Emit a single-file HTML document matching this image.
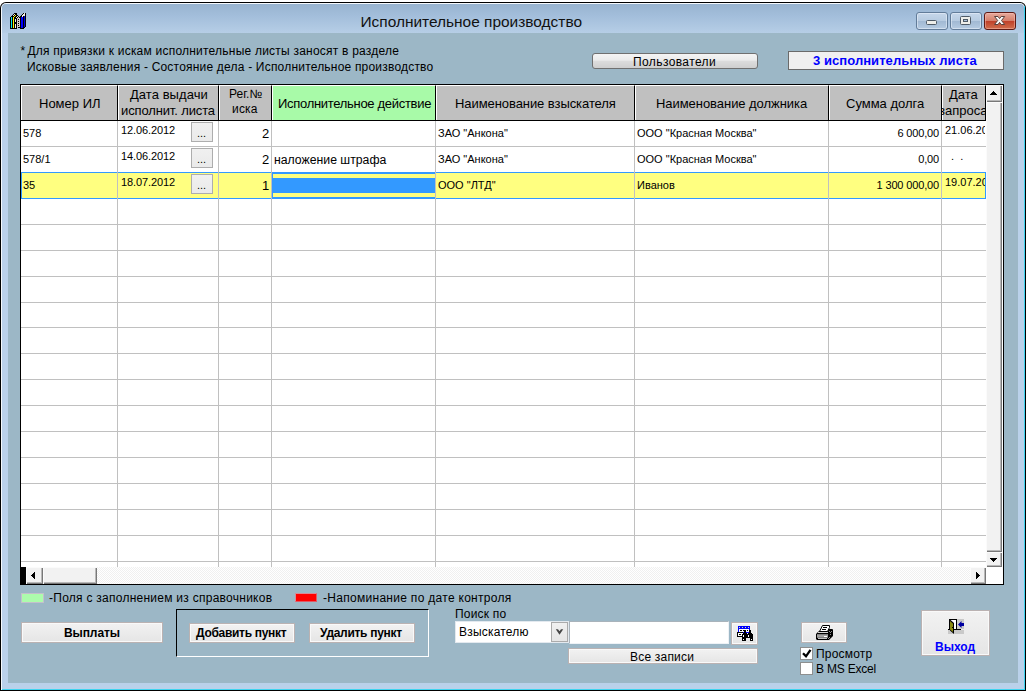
<!DOCTYPE html>
<html lang="ru">
<head>
<meta charset="utf-8">
<title>Исполнительное производство</title>
<style>
html,body{margin:0;padding:0;}
body{width:1026px;height:693px;background:#fff;position:relative;overflow:hidden;
 font-family:"Liberation Sans",sans-serif;font-size:12px;color:#000;}
*{box-sizing:border-box;}
.abs{position:absolute;}
.t{position:absolute;white-space:pre;line-height:1;}
#win{position:absolute;left:0;top:2px;width:1026px;height:689px;background:#000;
 border-radius:6px 6px 0 0;}
#winhl{position:absolute;left:1px;top:1px;width:1024px;height:687px;
 border-radius:5px 5px 0 0;background:#f4f8fc;}
#frame{position:absolute;left:2px;top:2px;width:1022px;height:685px;
 border-radius:4px 4px 0 0;background:#bad1ea;}
#cyanr{position:absolute;left:1024px;top:4px;width:1px;height:684px;background:#3fd4f0;}
#cyanb{position:absolute;left:2px;top:687px;width:1023px;height:1px;background:#3fd4f0;}
#titlebar{position:absolute;left:2px;top:2px;width:1022px;height:29px;
 border-radius:4px 4px 0 0;
 background:linear-gradient(#98b4d0 0px,#a3bedb 12px,#b6cee6 29px);}
#client{position:absolute;left:8px;top:33px;width:1010px;height:650px;background:#9cb7c6;}
.btn{position:absolute;border:1px solid #707070;border-radius:3px;
 background:linear-gradient(#f4f4f4 0,#ebebeb 45%,#dddddd 50%,#cfcfcf 100%);}
.fbtn{position:absolute;border:1px solid #bab2b2;box-shadow:inset 0 0 0 1px #f9f9f9;background:linear-gradient(#f2f2f2,#e5e5e5);}
.sbtn{position:absolute;border:1px solid #adadad;background:linear-gradient(#f0f0f0,#eaeaea);}
.hd{position:absolute;top:85px;height:35px;background:#c0c0c0;border-right:1px solid #000;border-top:1px solid #fff;}
.hd:before{content:"";position:absolute;left:0;top:0;bottom:0;width:1px;background:#fff;}
.vl{position:absolute;top:121px;width:1px;height:446px;background:#c0c0c0;}
.hl{position:absolute;left:21px;width:965px;height:1px;background:#c0c0c0;}
.cb{border:1px solid #627c99;border-radius:3px;background:linear-gradient(#c6d7ea 0,#b7cbe1 48%,#a1b9d3 52%,#b6cbe2 100%);box-shadow:inset 0 0 0 1px rgba(235,243,252,.55);}
.sb3d{background:#f2f2f2;box-shadow:inset 1px 1px 0 #fbfbfb,inset -1px -1px 0 #787878,inset -2px -2px 0 #b8b8b8;}
.c11{font-size:11px;}
.c12{font-size:12px;}
.c13{font-size:13px;}
.ls{letter-spacing:0.2px;}
</style>
</head>
<body>
<div id="win">
 <div id="winhl"></div>
 <div id="frame"></div>
 <div id="titlebar"></div>
 <div id="cyanr"></div>
 <div id="cyanb"></div>
</div>
<div id="client"></div>

<!-- title -->
<div class="t" id="title" style="left:360.5px;top:13.5px;font-size:15.45px;color:#111;">Исполнительное производство</div>

<!-- app icon -->
<svg class="abs" style="left:10px;top:13px" width="16" height="16" viewBox="0 0 16 16" shape-rendering="crispEdges">
 <rect x="4" y="0" width="3" height="1" fill="#000"/><rect x="13" y="0" width="1" height="1" fill="#000"/><rect x="14" y="0" width="1" height="1" fill="#f2eee4"/><rect x="15" y="0" width="1" height="1" fill="#000"/><rect x="3" y="1" width="1" height="1" fill="#000"/><rect x="4" y="1" width="1" height="1" fill="#f2eee4"/><rect x="5" y="1" width="2" height="1" fill="#000"/><rect x="12" y="1" width="1" height="1" fill="#000"/><rect x="13" y="1" width="2" height="1" fill="#f2eee4"/><rect x="15" y="1" width="1" height="1" fill="#000"/><rect x="2" y="2" width="1" height="1" fill="#000"/><rect x="3" y="2" width="1" height="1" fill="#f2eee4"/><rect x="4" y="2" width="1" height="1" fill="#000"/><rect x="5" y="2" width="1" height="1" fill="#ffff00"/><rect x="6" y="2" width="2" height="1" fill="#000"/><rect x="11" y="2" width="1" height="1" fill="#000"/><rect x="12" y="2" width="3" height="1" fill="#f2eee4"/><rect x="15" y="2" width="1" height="1" fill="#000"/><rect x="1" y="3" width="3" height="1" fill="#000"/><rect x="4" y="3" width="1" height="1" fill="#ffff00"/><rect x="5" y="3" width="2" height="1" fill="#000"/><rect x="7" y="3" width="1" height="1" fill="#f2eee4"/><rect x="8" y="3" width="1" height="1" fill="#000"/><rect x="10" y="3" width="2" height="1" fill="#000"/><rect x="12" y="3" width="1" height="1" fill="#f2eee4"/><rect x="13" y="3" width="1" height="1" fill="#000"/><rect x="14" y="3" width="1" height="1" fill="#0000d8"/><rect x="15" y="3" width="1" height="1" fill="#000"/><rect x="0" y="4" width="1" height="1" fill="#000"/><rect x="1" y="4" width="1" height="1" fill="#00e8e8"/><rect x="2" y="4" width="1" height="1" fill="#000"/><rect x="3" y="4" width="1" height="1" fill="#ffff00"/><rect x="4" y="4" width="2" height="1" fill="#000"/><rect x="6" y="4" width="1" height="1" fill="#f2eee4"/><rect x="7" y="4" width="1" height="1" fill="#000"/><rect x="8" y="4" width="1" height="1" fill="#d2cec6"/><rect x="9" y="4" width="2" height="1" fill="#000"/><rect x="11" y="4" width="2" height="1" fill="#0000ff"/><rect x="13" y="4" width="1" height="1" fill="#000"/><rect x="14" y="4" width="1" height="1" fill="#0000d8"/><rect x="15" y="4" width="1" height="1" fill="#000"/><rect x="0" y="5" width="1" height="1" fill="#000"/><rect x="1" y="5" width="1" height="1" fill="#00e8e8"/><rect x="2" y="5" width="1" height="1" fill="#000"/><rect x="3" y="5" width="1" height="1" fill="#ffff00"/><rect x="4" y="5" width="3" height="1" fill="#000"/><rect x="7" y="5" width="3" height="1" fill="#d2cec6"/><rect x="10" y="5" width="1" height="1" fill="#000"/><rect x="11" y="5" width="2" height="1" fill="#0000ff"/><rect x="13" y="5" width="1" height="1" fill="#000"/><rect x="14" y="5" width="1" height="1" fill="#0000d8"/><rect x="15" y="5" width="1" height="1" fill="#000"/><rect x="0" y="6" width="1" height="1" fill="#000"/><rect x="1" y="6" width="1" height="1" fill="#00e8e8"/><rect x="2" y="6" width="1" height="1" fill="#000"/><rect x="3" y="6" width="1" height="1" fill="#ffff00"/><rect x="4" y="6" width="1" height="1" fill="#000"/><rect x="5" y="6" width="1" height="1" fill="#f2eee4"/><rect x="6" y="6" width="1" height="1" fill="#000"/><rect x="7" y="6" width="1" height="1" fill="#d2cec6"/><rect x="8" y="6" width="1" height="1" fill="#000"/><rect x="9" y="6" width="1" height="1" fill="#d2cec6"/><rect x="10" y="6" width="1" height="1" fill="#000"/><rect x="11" y="6" width="2" height="1" fill="#0000ff"/><rect x="13" y="6" width="1" height="1" fill="#000"/><rect x="14" y="6" width="1" height="1" fill="#0000d8"/><rect x="15" y="6" width="1" height="1" fill="#000"/><rect x="0" y="7" width="1" height="1" fill="#000"/><rect x="1" y="7" width="1" height="1" fill="#00e8e8"/><rect x="2" y="7" width="1" height="1" fill="#000"/><rect x="3" y="7" width="1" height="1" fill="#ffff00"/><rect x="4" y="7" width="1" height="1" fill="#000"/><rect x="5" y="7" width="1" height="1" fill="#f2eee4"/><rect x="6" y="7" width="1" height="1" fill="#000"/><rect x="7" y="7" width="3" height="1" fill="#d2cec6"/><rect x="10" y="7" width="1" height="1" fill="#000"/><rect x="11" y="7" width="2" height="1" fill="#0000ff"/><rect x="13" y="7" width="1" height="1" fill="#000"/><rect x="14" y="7" width="1" height="1" fill="#0000d8"/><rect x="15" y="7" width="1" height="1" fill="#000"/><rect x="0" y="8" width="1" height="1" fill="#000"/><rect x="1" y="8" width="1" height="1" fill="#00e8e8"/><rect x="2" y="8" width="1" height="1" fill="#000"/><rect x="3" y="8" width="1" height="1" fill="#ffff00"/><rect x="4" y="8" width="1" height="1" fill="#000"/><rect x="5" y="8" width="1" height="1" fill="#f2eee4"/><rect x="6" y="8" width="1" height="1" fill="#000"/><rect x="7" y="8" width="1" height="1" fill="#d2cec6"/><rect x="8" y="8" width="1" height="1" fill="#000"/><rect x="9" y="8" width="1" height="1" fill="#d2cec6"/><rect x="10" y="8" width="1" height="1" fill="#000"/><rect x="11" y="8" width="2" height="1" fill="#0000ff"/><rect x="13" y="8" width="1" height="1" fill="#000"/><rect x="14" y="8" width="1" height="1" fill="#0000d8"/><rect x="15" y="8" width="1" height="1" fill="#000"/><rect x="0" y="9" width="1" height="1" fill="#000"/><rect x="1" y="9" width="1" height="1" fill="#00e8e8"/><rect x="2" y="9" width="1" height="1" fill="#000"/><rect x="3" y="9" width="1" height="1" fill="#ffff00"/><rect x="4" y="9" width="3" height="1" fill="#000"/><rect x="7" y="9" width="3" height="1" fill="#d2cec6"/><rect x="10" y="9" width="1" height="1" fill="#000"/><rect x="11" y="9" width="2" height="1" fill="#0000ff"/><rect x="13" y="9" width="1" height="1" fill="#000"/><rect x="14" y="9" width="1" height="1" fill="#0000d8"/><rect x="15" y="9" width="1" height="1" fill="#000"/><rect x="0" y="10" width="1" height="1" fill="#000"/><rect x="1" y="10" width="1" height="1" fill="#00e8e8"/><rect x="2" y="10" width="1" height="1" fill="#000"/><rect x="3" y="10" width="1" height="1" fill="#ffff00"/><rect x="4" y="10" width="3" height="1" fill="#000"/><rect x="7" y="10" width="1" height="1" fill="#d2cec6"/><rect x="8" y="10" width="1" height="1" fill="#000"/><rect x="9" y="10" width="1" height="1" fill="#d2cec6"/><rect x="10" y="10" width="1" height="1" fill="#000"/><rect x="11" y="10" width="2" height="1" fill="#0000ff"/><rect x="13" y="10" width="1" height="1" fill="#000"/><rect x="14" y="10" width="1" height="1" fill="#0000d8"/><rect x="15" y="10" width="1" height="1" fill="#000"/><rect x="0" y="11" width="1" height="1" fill="#000"/><rect x="1" y="11" width="1" height="1" fill="#00e8e8"/><rect x="2" y="11" width="1" height="1" fill="#000"/><rect x="3" y="11" width="1" height="1" fill="#ffff00"/><rect x="4" y="11" width="1" height="1" fill="#000"/><rect x="5" y="11" width="1" height="1" fill="#f2eee4"/><rect x="6" y="11" width="1" height="1" fill="#000"/><rect x="7" y="11" width="3" height="1" fill="#d2cec6"/><rect x="10" y="11" width="1" height="1" fill="#000"/><rect x="11" y="11" width="2" height="1" fill="#0000ff"/><rect x="13" y="11" width="1" height="1" fill="#000"/><rect x="14" y="11" width="1" height="1" fill="#0000d8"/><rect x="15" y="11" width="1" height="1" fill="#000"/><rect x="0" y="12" width="1" height="1" fill="#000"/><rect x="1" y="12" width="1" height="1" fill="#00e8e8"/><rect x="2" y="12" width="1" height="1" fill="#000"/><rect x="3" y="12" width="1" height="1" fill="#ffff00"/><rect x="4" y="12" width="1" height="1" fill="#000"/><rect x="5" y="12" width="1" height="1" fill="#f2eee4"/><rect x="6" y="12" width="1" height="1" fill="#000"/><rect x="7" y="12" width="1" height="1" fill="#d2cec6"/><rect x="8" y="12" width="1" height="1" fill="#000"/><rect x="9" y="12" width="1" height="1" fill="#d2cec6"/><rect x="10" y="12" width="1" height="1" fill="#000"/><rect x="11" y="12" width="2" height="1" fill="#0000ff"/><rect x="13" y="12" width="1" height="1" fill="#000"/><rect x="14" y="12" width="1" height="1" fill="#0000d8"/><rect x="15" y="12" width="1" height="1" fill="#000"/><rect x="0" y="13" width="1" height="1" fill="#000"/><rect x="1" y="13" width="1" height="1" fill="#00e8e8"/><rect x="2" y="13" width="1" height="1" fill="#000"/><rect x="3" y="13" width="1" height="1" fill="#ffff00"/><rect x="4" y="13" width="1" height="1" fill="#000"/><rect x="5" y="13" width="1" height="1" fill="#f2eee4"/><rect x="6" y="13" width="1" height="1" fill="#000"/><rect x="7" y="13" width="3" height="1" fill="#d2cec6"/><rect x="10" y="13" width="1" height="1" fill="#000"/><rect x="11" y="13" width="2" height="1" fill="#0000ff"/><rect x="13" y="13" width="1" height="1" fill="#000"/><rect x="14" y="13" width="1" height="1" fill="#0000d8"/><rect x="15" y="13" width="1" height="1" fill="#000"/><rect x="0" y="14" width="1" height="1" fill="#000"/><rect x="1" y="14" width="1" height="1" fill="#00e8e8"/><rect x="2" y="14" width="1" height="1" fill="#000"/><rect x="3" y="14" width="1" height="1" fill="#ffff00"/><rect x="4" y="14" width="1" height="1" fill="#000"/><rect x="5" y="14" width="1" height="1" fill="#f2eee4"/><rect x="6" y="14" width="1" height="1" fill="#000"/><rect x="7" y="14" width="1" height="1" fill="#d2cec6"/><rect x="8" y="14" width="3" height="1" fill="#000"/><rect x="11" y="14" width="2" height="1" fill="#0000ff"/><rect x="13" y="14" width="2" height="1" fill="#000"/><rect x="0" y="15" width="7" height="1" fill="#000"/><rect x="10" y="15" width="4" height="1" fill="#000"/>
</svg>

<!-- caption buttons -->
<div class="abs cb" style="left:916px;top:12px;width:32px;height:18px;"></div>
<div class="abs cb" style="left:950px;top:12px;width:32px;height:18px;"></div>
<div class="abs" style="left:984px;top:12px;width:32px;height:18px;border:1px solid #5e1a14;border-radius:3px;background:linear-gradient(#e6aa9d 0,#d67f6b 48%,#c0412a 52%,#d06f4e 100%);box-shadow:inset 0 0 0 1px rgba(255,200,190,.45);"></div>
<svg class="abs" style="left:916px;top:12px" width="100" height="18" viewBox="0 0 100 18">
 <rect x="10.5" y="8.500" width="10" height="4" rx="1" fill="#eeeeea" stroke="#4e5a66" stroke-width="1"/>
 <rect x="44.500" y="4.500" width="10" height="8" rx="1" fill="#eeeeea" stroke="#4e5a66" stroke-width="1"/>
 <rect x="47.5" y="7.500" width="4" height="2" fill="#a9c0da" stroke="#4e5a66" stroke-width="1"/>
 <path d="M78.500 4.500 L82 4.500 L83.600 6.600 L85.200 4.500 L88.700 4.500 L85.500 8.500 L88.700 12.500 L85.200 12.500 L83.600 10.400 L82 12.500 L78.500 12.500 L81.700 8.500Z" fill="#f8f8f8" stroke="#58403c" stroke-width="1" stroke-linejoin="round"/>
</svg>

<!-- top labels -->
<div class="t ls" style="left:20.5px;top:45px;">*</div><div class="t" style="left:27.5px;top:45px;letter-spacing:0.22px;">Для привязки к искам исполнительные листы заносят в разделе</div>
<div class="t ls" style="left:27px;top:61px;">Исковые заявления - Состояние дела - Исполнительное производство</div>

<div class="btn" style="left:592px;top:53px;width:166px;height:16px;"></div>
<div class="t" style="left:633px;top:56px;letter-spacing:0.4px;">Пользователи</div>

<div class="abs" style="left:788px;top:51px;width:216px;height:19px;background:#f0f0f0;border:1px solid #6a6a6a;"></div>
<div class="t" style="left:813px;top:54px;font-size:13px;font-weight:bold;color:#0000ff;letter-spacing:0.06px;">3 исполнительных листа</div>

<!-- grid -->
<div class="abs" id="grid" style="left:20px;top:84px;width:984px;height:501px;background:#000;"></div>
<div class="abs" style="left:21px;top:85px;width:982px;height:499px;background:#fff;"></div>
<!-- headers -->
<div class="hd" style="left:21px;width:97px;"></div>
<div class="hd" style="left:118px;width:101px;"></div>
<div class="hd" style="left:219px;width:53px;"></div>
<div class="hd" style="left:272px;width:164px;background:#a8faa8;"></div>
<div class="hd" style="left:436px;width:199px;"></div>
<div class="hd" style="left:635px;width:194px;"></div>
<div class="hd" style="left:829px;width:113px;"></div>
<div class="hd" style="left:942px;width:44px;"></div>
<div class="abs" style="left:21px;top:120px;width:965px;height:1px;background:#000;"></div>

<div class="t c13" style="left:39px;top:96.500px;">Номер ИЛ</div>
<div class="t c13" style="left:130px;top:88px;letter-spacing:0.05px;">Дата выдачи</div>
<div class="t c13" style="left:121px;top:104px;letter-spacing:-0.13px;">исполнит. листа</div>
<div class="t c12" style="left:229px;top:88px;">Рег.№</div>
<div class="t c12" style="left:232px;top:103px;letter-spacing:0.2px;">иска</div>
<div class="t c13" style="left:278px;top:96.500px;letter-spacing:-0.3px;">Исполнительное действие</div>
<div class="t c13" style="left:455px;top:96.500px;letter-spacing:-0.07px;">Наименование взыскателя</div>
<div class="t c13" style="left:656px;top:96.500px;letter-spacing:-0.05px;">Наименование должника</div>
<div class="t c13" style="left:846px;top:96.500px;">Сумма долга</div>
<div class="t c13" style="left:949px;top:88px;">Дата</div>
<div class="abs" style="left:942px;top:102px;width:43px;height:17px;overflow:hidden;"><div class="t c13" style="left:-3px;top:2px;">запроса</div></div>

<!-- selected row -->
<div class="abs" style="left:21px;top:172px;width:965px;height:27px;background:#3399ff;"></div>
<div class="abs" style="left:22px;top:173px;width:963px;height:25px;background:#ffff80;"></div>
<div class="abs" style="left:272px;top:173px;width:164px;height:25px;background:#3399ff;"></div>
<div class="abs" style="left:273px;top:174px;width:162px;height:23px;background:#ffff80;"></div>
<div class="abs" style="left:273px;top:178px;width:162px;height:15px;background:#3399ff;"></div>

<!-- grid lines -->
<div id="lines"><div class="vl" style="left:117px"></div><div class="vl" style="left:218px"></div><div class="vl" style="left:271px"></div><div class="vl" style="left:435px"></div><div class="vl" style="left:634px"></div><div class="vl" style="left:828px"></div><div class="vl" style="left:941px"></div><div class="hl" style="top:146px"></div><div class="hl" style="top:224px"></div><div class="hl" style="top:250px"></div><div class="hl" style="top:276px"></div><div class="hl" style="top:302px"></div><div class="hl" style="top:327px"></div><div class="hl" style="top:353px"></div><div class="hl" style="top:379px"></div><div class="hl" style="top:405px"></div><div class="hl" style="top:431px"></div><div class="hl" style="top:457px"></div><div class="hl" style="top:483px"></div><div class="hl" style="top:509px"></div><div class="hl" style="top:535px"></div><div class="hl" style="top:561px"></div></div>

<!-- cell texts -->
<div class="t c11" style="left:23px;top:128px;">578</div>
<div class="t c11" style="left:23px;top:154px;">578/1</div>
<div class="t c11" style="left:23px;top:180px;">35</div>
<div class="t c11" style="left:121px;top:125px;letter-spacing:-0.1px;">12.06.2012</div>
<div class="t c11" style="left:121px;top:151px;letter-spacing:-0.1px;">14.06.2012</div>
<div class="t c11" style="left:121px;top:177px;letter-spacing:-0.1px;">18.07.2012</div>
<div class="sbtn" style="left:191px;top:122px;width:22px;height:20px;"></div><div class="t c11" style="left:197px;top:128px;">...</div>
<div class="sbtn" style="left:191px;top:148px;width:22px;height:20px;"></div><div class="t c11" style="left:197px;top:154px;">...</div>
<div class="sbtn" style="left:191px;top:174px;width:22px;height:20px;"></div><div class="t c11" style="left:197px;top:180px;">...</div>
<div class="t c13" style="left:262px;top:127px;">2</div>
<div class="t c13" style="left:262px;top:153px;">2</div>
<div class="t c13" style="left:262px;top:179px;">1</div>
<div class="t" style="left:274px;top:153px;font-size:13.7px;transform:scaleX(0.895);transform-origin:0 0;">наложение штрафа</div>
<div class="t c11" style="left:438px;top:128px;">ЗАО "Анкона"</div>
<div class="t c11" style="left:438px;top:154px;">ЗАО "Анкона"</div>
<div class="t c11" style="left:438px;top:180px;">ООО "ЛТД"</div>
<div class="t c11" style="left:637px;top:128px;">ООО "Красная Москва"</div>
<div class="t c11" style="left:637px;top:154px;">ООО "Красная Москва"</div>
<div class="t c11" style="left:637px;top:180px;">Иванов</div>
<div class="t c11" style="right:87px;top:128px;letter-spacing:-0.15px;">6 000,00</div>
<div class="t c11" style="right:87px;top:154px;letter-spacing:-0.15px;">0,00</div>
<div class="t c11" style="right:87px;top:180px;letter-spacing:-0.15px;">1 300 000,00</div>
<div class="abs" style="left:943px;top:121px;width:42px;height:78px;overflow:hidden;">
 <div class="t c11" style="left:2px;top:4px;">21.06.2012</div>
 <div class="t c11" style="left:8px;top:30px;">.  .</div>
 <div class="t c11" style="left:2px;top:56px;">19.07.2012</div>
</div>

<!-- vertical scrollbar -->
<div class="abs" style="left:986px;top:85px;width:17px;height:499px;background:#fff;"></div>
<div class="abs sb3d" style="left:986px;top:85px;width:16px;height:17px;"></div>
<div class="abs sb3d" style="left:986px;top:102px;width:16px;height:450px;"></div>
<div class="abs sb3d" style="left:986px;top:552px;width:16px;height:15px;"></div>
<svg class="abs" style="left:986px;top:85px" width="16" height="17" shape-rendering="crispEdges"><path d="M4 10 L11 10 L7.500 6Z" fill="#000"/></svg>
<svg class="abs" style="left:986px;top:552px" width="16" height="15" shape-rendering="crispEdges"><path d="M4 6 L11 6 L7.500 10Z" fill="#000"/></svg>

<!-- horizontal scrollbar -->
<div class="abs" style="left:21px;top:567px;width:965px;height:17px;background:#f7f7f7;background-image:repeating-conic-gradient(#ffffff 0 25%,#f0f0f0 0 50%);background-size:2px 2px;"></div>
<div class="abs" style="left:21px;top:567px;width:5px;height:17px;background:#000;"></div>
<div class="abs sb3d" style="left:26px;top:567px;width:17px;height:17px;"></div>
<div class="abs sb3d" style="left:43px;top:567px;width:54px;height:17px;"></div>
<div class="abs sb3d" style="left:970px;top:567px;width:16px;height:17px;"></div>
<svg class="abs" style="left:26px;top:567px" width="17" height="17" shape-rendering="crispEdges"><path d="M9 5 L9 12 L5 8.500Z" fill="#000"/></svg>
<svg class="abs" style="left:970px;top:567px" width="16" height="17" shape-rendering="crispEdges"><path d="M6 5 L6 12 L10 8.500Z" fill="#000"/></svg>

<!-- legend -->
<div class="abs" style="left:21px;top:593px;width:23px;height:10px;background:#acfcac;border:1px solid #c4c0cc;"></div>
<div class="t" style="left:49px;top:592px;letter-spacing:0.26px;">-Поля с заполнением из справочников</div>
<div class="abs" style="left:295px;top:593px;width:22px;height:9px;background:#ff0000;border:1px solid #e8707a;border-color:#d98a96 #e05a66 #e05a66 #d98a96;"></div>
<div class="t" style="left:323px;top:592px;letter-spacing:0.29px;">-Напоминание по дате контроля</div>

<!-- bottom buttons -->
<div class="fbtn" style="left:21px;top:622px;width:142px;height:21px;"></div>
<div class="t" style="left:64px;top:627px;font-weight:bold;letter-spacing:-0.1px;">Выплаты</div>

<div class="abs" style="left:176px;top:609px;width:253px;height:48px;border-left:1px solid #000;border-top:1px solid #000;border-right:1px solid #fff;border-bottom:1px solid #fff;"></div>
<div class="fbtn" style="left:189px;top:623px;width:106px;height:20px;"></div>
<div class="t" style="left:196px;top:627px;font-weight:bold;letter-spacing:-0.3px;">Добавить пункт</div>
<div class="fbtn" style="left:309px;top:623px;width:106px;height:20px;"></div>
<div class="t" style="left:320px;top:627px;font-weight:bold;letter-spacing:-0.3px;">Удалить пункт</div>

<div class="t ls" style="left:455px;top:608px;">Поиск по</div>
<div class="abs" style="left:455px;top:621px;width:114px;height:22px;background:#fff;border:1px solid #e3e9ef;"></div>
<div class="t ls" style="left:459px;top:626px;">Взыскателю</div>
<div class="abs" style="left:551px;top:622px;width:17px;height:20px;background:linear-gradient(#f0f0f0,#e6e6e6);border:1px solid #ababab;"></div>
<svg class="abs" style="left:551px;top:622px" width="17" height="20"><path d="M4.800 7.200 L7 7.200 L8.500 9.200 L10 7.200 L12.200 7.200 L8.500 12.800Z" fill="#454545"/></svg>
<div class="abs" style="left:569px;top:621px;width:160px;height:23px;background:#fff;border:1px solid #eef2f6;border-top-color:#a9b3bb;border-left-color:#a9b3bb;"></div>
<div class="fbtn" style="left:731px;top:622px;width:27px;height:23px;"></div>
<svg class="abs" style="left:737px;top:626px" width="16" height="16" viewBox="0 0 16 16" shape-rendering="crispEdges">
 <rect x="1" y="0" width="12" height="7" fill="#0000ff"/>
 <rect x="2" y="1" width="1" height="1" fill="#e8e8a0"/><rect x="5" y="1" width="1" height="1" fill="#e8e8a0"/><rect x="8" y="1" width="1" height="1" fill="#e8e8a0"/><rect x="11" y="1" width="1" height="1" fill="#e8e8a0"/>
 <rect x="2" y="3" width="10" height="3" fill="#fff"/>
 <rect x="3" y="4" width="2" height="1" fill="#000"/><rect x="6" y="4" width="2" height="1" fill="#000"/><rect x="10" y="4" width="1" height="1" fill="#000"/>
 <rect x="0" y="6" width="6" height="5" fill="#000"/>
 <rect x="1" y="7" width="5" height="3" fill="#fff"/>
 <rect x="2" y="8" width="2" height="1" fill="#000"/>
 <rect x="7" y="4" width="2" height="3" fill="#000"/>
 <rect x="12" y="4" width="2" height="4" fill="#000"/>
 <rect x="6" y="7" width="9" height="4" fill="#000"/>
 <rect x="5" y="8" width="4" height="7" fill="#000"/>
 <rect x="13" y="8" width="3" height="7" fill="#000"/>
 <rect x="9" y="11" width="4" height="1" fill="#000"/>
 <rect x="10" y="7" width="1" height="1" fill="#fff"/>
 <rect x="6" y="9" width="1" height="2" fill="#fff"/><rect x="11" y="9" width="1" height="2" fill="#fff"/>
 <rect x="6" y="13" width="1" height="1" fill="#fff"/><rect x="14" y="13" width="1" height="1" fill="#fff"/>
</svg>
<div class="fbtn" style="left:568px;top:648px;width:190px;height:16px;"></div>
<div class="t ls" style="left:630px;top:651px;">Все записи</div>

<!-- print button -->
<div class="fbtn" style="left:801px;top:622px;width:46px;height:21px;"></div>
<svg class="abs" style="left:816px;top:625px" width="18" height="16" viewBox="0 0 18 16">
 <path d="M0 9 L3 6 L14 4 L16.500 4 L17 5 L17 11 L13 15 L1 15 L0 14Z" fill="#000"/>
 <path d="M6.500 0.500 L13.500 0.500 L13.500 2.500 L11.500 6.500 L3.500 6.500Z" fill="#fff" stroke="#000" stroke-width="1"/>
 <path d="M7 2.500 L11 2.500 M6 4.500 L10 4.500" stroke="#000" stroke-width="1"/>
 <rect x="2" y="7" width="10" height="1" fill="#d4d4d4"/>
 <rect x="1" y="9" width="11" height="4" fill="#808080"/>
 <rect x="1" y="10" width="11" height="2" fill="#a0a0a0"/>
 <rect x="8" y="11" width="3" height="1" fill="#fff"/>
 <rect x="2" y="13" width="9" height="1" fill="#c0c0c0"/>
 <rect x="13" y="6" width="1" height="1" fill="#909090"/><rect x="15" y="6" width="1" height="1" fill="#909090"/>
 <rect x="14" y="7" width="1" height="1" fill="#909090"/><rect x="14" y="9" width="1" height="1" fill="#909090"/>
 <rect x="13" y="12" width="1" height="1" fill="#909090"/><rect x="12" y="13" width="1" height="1" fill="#909090"/>
</svg>
<div class="abs" style="left:800px;top:647px;width:13px;height:13px;background:#fff;border:1px solid #8e8f8f;"></div>
<svg class="abs" style="left:800px;top:647px" width="13" height="13"><path d="M3 6.200 L6 9.300 L10.500 2.800" fill="none" stroke="#000" stroke-width="2.300"/></svg>
<div class="abs" style="left:800px;top:662px;width:13px;height:13px;background:#fff;border:1px solid #8e8f8f;"></div>
<div class="t ls" style="left:816px;top:648px;">Просмотр</div>
<div class="t" style="left:816px;top:663px;letter-spacing:-0.2px;">В MS Excel</div>

<!-- exit -->
<div class="fbtn" style="left:921px;top:610px;width:69px;height:46px;"></div>
<svg class="abs" style="left:948px;top:619px" width="16" height="15" viewBox="0 0 16 15" shape-rendering="crispEdges">
 <rect x="9" y="0" width="7" height="10" fill="#c9c9c9"/>
 <rect x="0" y="11" width="16" height="4" fill="#c9c9c9"/>
 <rect x="1" y="0" width="8" height="11" fill="#000"/>
 <rect x="0" y="10" width="13" height="1" fill="#000"/>
 <rect x="2" y="1" width="6" height="9" fill="#fff"/>
 <path d="M2 0.500 L6 4 L6 15 L2 11.500Z" fill="#000" shape-rendering="auto"/>
 <path d="M2 2 L5 4.700 L5 13 L2 10.500Z" fill="#8a8a10" shape-rendering="auto"/>
 <rect x="4" y="8" width="1" height="1" fill="#000"/>
 <path d="M10 5.500 L13.500 2 L13.500 4 L16 4 L16 7 L13.500 7 L13.500 9Z" fill="#0000a0" shape-rendering="auto"/>
</svg>
<div class="t" style="left:935px;top:641px;font-weight:bold;color:#0000ff;">Выход</div>


</body>
</html>
